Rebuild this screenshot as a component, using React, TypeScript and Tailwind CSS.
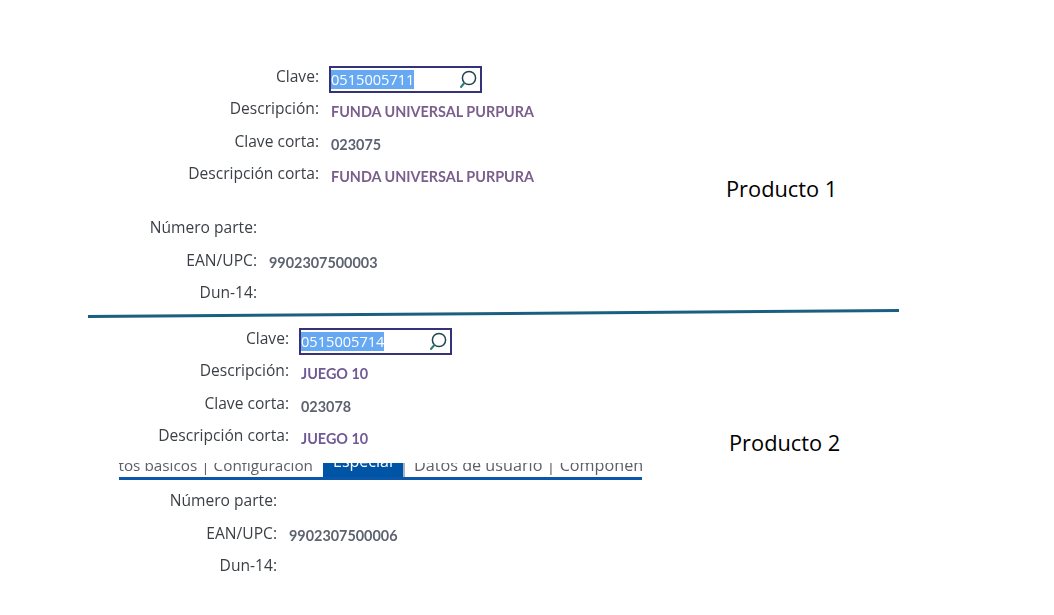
import React from "react";

const LABEL = "text-right text-[15.6px] leading-[20px] text-[#3b3f45] [font-family:'Open_Sans',sans-serif] blur-[0.35px] whitespace-nowrap";
const VALUE = "text-[14.4px] leading-[20px] font-bold whitespace-nowrap [font-family:'Lato',sans-serif] blur-[0.4px]";

function SearchIcon() {
  return (
    <svg width="20" height="20" viewBox="0 0 20 20" fill="none" className="shrink-0">
      <circle cx="10" cy="8" r="6.6" stroke="#1f4650" strokeWidth="1.5" />
      <path d="M5.3 13 L2 17" stroke="#2f7d78" strokeWidth="2" strokeLinecap="round" />
    </svg>
  );
}

function KeyField({ value }: { value: string }) {
  return (
    <div className="w-[153px] h-[27px] border-2 border-[#35327a] flex items-center pl-0 pr-[1px] justify-between bg-white">
      <span className="bg-[#66a8f2] text-white h-[19px] leading-[19px] text-[14.6px] w-[83px] overflow-hidden whitespace-nowrap [font-family:'Open_Sans',sans-serif] blur-[0.3px]">
        {value}
      </span>
      <SearchIcon />
    </div>
  );
}

function Head({ clave, d, c, dc, dcls, name, nameClass }: { clave: string; d: string; c: string; dc: string; dcls: string; name: string; nameClass: string }) {
  return (
    <div className="relative">
      <div className="flex h-[32px]">
        <div className={`w-[319px] -mt-[1px] ${LABEL}`}>Clave:</div>
        <div className="ml-[10px] -mt-[1px]"><KeyField value={clave} /></div>
      </div>
      <div className="flex h-[33px]">
        <div className={`w-[319px] -mt-[1px] ${LABEL}`}>Descripción:</div>
        <div className={`ml-[12px] mt-[3px] ${VALUE} ${dcls}`}>{d}</div>
      </div>
      <div className="flex h-[32px]">
        <div className={`w-[319px] -mt-[1px] ${LABEL}`}>Clave corta:</div>
        <div className={`ml-[12px] mt-[3px] ${VALUE} text-[#5d6270]`}>{c}</div>
      </div>
      <div className="flex h-[24px]">
        <div className={`w-[319px] -mt-[1px] ${LABEL}`}>Descripción corta:</div>
        <div className={`ml-[12px] mt-[3px] ${VALUE} ${dcls}`}>{dc}</div>
      </div>
      <div className={`absolute text-[21.8px] leading-[28px] text-black [font-family:'Open_Sans',sans-serif] whitespace-nowrap ${nameClass}`}>{name}</div>
    </div>
  );
}

function Tail({ ean, labelW }: { ean: string; labelW: string }) {
  return (
    <div>
      <div className="flex h-[33px]"><div className={`${labelW} ${LABEL}`}>Número parte:</div></div>
      <div className="flex h-[32px]">
        <div className={`${labelW} ${LABEL}`}>EAN/UPC:</div>
        <div className={`ml-[12px] mt-[3px] ${VALUE} text-[#5d6270]`}>{ean}</div>
      </div>
      <div className="flex h-[20px]"><div className={`${labelW} ${LABEL}`}>Dun-14:</div></div>
    </div>
  );
}

function TabBar() {
  const tab = "leading-[20px] text-[#5b5f66] whitespace-nowrap [font-family:'Open_Sans',sans-serif] blur-[0.35px]";
  return (
    <div className="ml-[119px] w-[523px] h-[17px] border-b-[3px] border-[#0a56a8] flex overflow-hidden">
      <div className="w-[204px] flex justify-end overflow-hidden shrink-0 pr-[10px]">
        <span className={`${tab} text-[15.3px] -mt-[8px]`}>Datos básicos | Configuración</span>
      </div>
      <div className="w-[82px] h-[14px] bg-[#0054a6] border-r-2 border-[#a9b4c0] flex justify-center shrink-0 overflow-hidden">
        <span className={`${tab} text-[16px] !text-white -mt-[12px]`}>Especial</span>
      </div>
      <div className="pl-[9px] overflow-hidden flex-1">
        <span className={`${tab} text-[16.2px] block -mt-[8px]`}>Datos de usuario | Componentes</span>
      </div>
    </div>
  );
}

export default function App() {
  return (
    <div className="w-[1054px] h-[615px] bg-white overflow-hidden pt-[67px]">
      <Head clave="0515005711" d="FUNDA UNIVERSAL PURPURA" c="023075" dc="FUNDA UNIVERSAL PURPURA" dcls="text-[#7a5f8c]" name="Producto 1" nameClass="left-[726px] top-[108px]" />
      <div className="mt-[29px]">
        <Tail ean="9902307500003" labelW="w-[257px]" />
      </div>
      <div className="mt-[10px] ml-[88px] w-[811px] h-[3px] bg-[#1b5f80] -rotate-[0.42deg]" />
      <div className="mt-[14px] -ml-[30px]">
        <Head clave="0515005714" d="JUEGO 10" c="023078" dc="JUEGO 10" dcls="text-[#6f5a96]" name="Producto 2" nameClass="left-[759px] top-[100px]" />
      </div>
      <div className="mt-[13px]">
        <TabBar />
      </div>
      <div className="mt-[10px]">
        <Tail ean="9902307500006" labelW="w-[277px]" />
      </div>
    </div>
  );
}
